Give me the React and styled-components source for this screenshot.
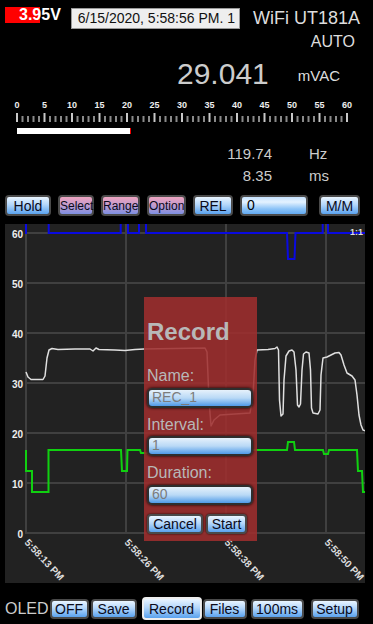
import React from "react";
import styled, { createGlobalStyle, css } from "styled-components";

const GlobalStyle = createGlobalStyle`
  html, body {
    margin: 0;
    padding: 0;
    background: #000;
  }
  body {
    font-family: "Liberation Sans", Arial, sans-serif;
  }
`;

const Page = styled.div`
  width: 373px;
  height: 624px;
  box-sizing: border-box;
  padding: 5px 0 0 5px;
  background: #000;
  color: #ccc;
  overflow: hidden;
`;

const TopRow = styled.div`
  display: flex;
  align-items: flex-start;
  height: 24px;
`;

const Battery = styled.div`
  margin-top: 2px;
  height: 16px;
  line-height: 16px;
  padding-left: 14px;
  font-size: 16px;
  font-weight: bold;
  color: #fff;
  background: linear-gradient(to right, #f00 35px, transparent 35px);
`;

const DateBox = styled.div`
  margin: 3px 0 0 10px;
  width: 169px;
  height: 21px;
  box-sizing: border-box;
  padding-left: 6px;
  border: 1px solid #999;
  background: #eee;
  color: #111;
  font-size: 14px;
  line-height: 19px;
`;

const DeviceName = styled.div`
  margin: 4px 13px 0 auto;
  font-size: 18px;
  line-height: 18px;
  color: #ddd;
`;

const ModeLabel = styled.div`
  margin-top: 5px;
  padding-right: 18px;
  text-align: right;
  font-size: 16px;
  line-height: 16px;
  color: #ddd;
`;

const Reading = styled.div`
  display: flex;
  justify-content: flex-end;
  align-items: flex-start;
  margin-top: 9px;
  padding-right: 33px;
  height: 30px;
`;

const Value = styled.span`
  font-size: 30px;
  line-height: 30px;
  margin-right: 29px;
  color: #ccc;
`;

const Unit = styled.span`
  margin-top: 9px;
  font-size: 15px;
  line-height: 15px;
  color: #ddd;
`;

const ScaleSvg = styled.svg`
  display: block;
  margin-top: 6px;
`;

const Stats = styled.div`
  display: grid;
  grid-template-columns: 267px auto;
  column-gap: 37px;
  margin-top: 6px;
  font-size: 15px;
  line-height: 22px;
  color: #ccc;
`;

const StatValue = styled.span`
  text-align: right;
`;

const Toolbar = styled.div`
  display: flex;
  align-items: center;
  gap: 7px;
  margin-top: 8px;
  height: 21px;
`;

const Btn = styled.button`
  box-sizing: border-box;
  flex: none;
  width: ${(p) => p.$w}px;
  height: ${(p) => p.$h || 21}px;
  margin-left: ${(p) => p.$ml || 0}px;
  padding: 0;
  border: 2px solid ${(p) => (p.$active ? "#eee" : "#4a4a4a")};
  border-radius: 4px;
  background: linear-gradient(#eaf5ff, #b4d7fb 45%, #5aa2ee);
  color: #0a0a1a;
  font-family: "Liberation Sans", Arial, sans-serif;
  font-size: ${(p) => p.$fs || 14}px;
  line-height: 1;
  box-shadow: 0 0 2px #000;
  white-space: nowrap;
  ${(p) =>
    p.$pink &&
    css`
      background: linear-gradient(#eea4c0, #c69ccc 45%, #7e8fe2);
    `}
`;

const OffsetInput = styled.div`
  box-sizing: border-box;
  width: 68px;
  height: 21px;
  padding-left: 5px;
  border: 2px solid #4a4a4a;
  border-radius: 4px;
  background: linear-gradient(#c6e3ff, #e4f2ff 30%, #8cc3f7 70%, #62aaf2);
  color: #000;
  font-size: 14px;
  line-height: 17px;
`;

const Chart = styled.div`
  position: relative;
  margin-top: 8px;
  width: 360px;
  height: 359px;
  background: #222;
`;

const ChartSvg = styled.svg`
  display: block;
`;

const Dialog = styled.div`
  position: absolute;
  left: 139px;
  top: 73px;
  width: 113px;
  height: 244px;
  box-sizing: border-box;
  padding: 23px 0 0 3px;
  background: rgba(158, 45, 45, 0.88);
  color: #b8b8b8;
`;

const DialogTitle = styled.div`
  font-size: 24px;
  line-height: 24px;
  font-weight: bold;
`;

const FieldLabel = styled.div`
  margin-top: ${(p) => p.$mt || 9}px;
  font-size: 16px;
  line-height: 16px;
`;

const FieldInput = styled.div`
  box-sizing: border-box;
  margin-top: 3.5px;
  width: 106px;
  height: 20px;
  padding-left: 3px;
  border: 2px solid #2e2e2e;
  border-radius: 5px;
  background: linear-gradient(#e6f1fb, #b9d9f6 50%, #4f9ae8);
  box-shadow: 0 0 3px #000;
  color: #7c7c7c;
  font-size: 14px;
  line-height: 15px;
`;

const DialogActions = styled.div`
  display: flex;
  gap: 3px;
  margin-top: 9px;
`;

const BottomBar = styled.div`
  display: flex;
  align-items: center;
  margin-top: 14px;
  height: 23px;
`;

const Oled = styled.span`
  font-size: 16px;
  line-height: 16px;
  color: #ccc;
`;

const ticks = Array.from({ length: 61 }, (_, i) => i);
const labels = [0, 5, 10, 15, 20, 25, 30, 35, 40, 45, 50, 55, 60];

const Scale = () => (
  <ScaleSvg width="360" height="42" viewBox="5 95 360 42">
    {labels.map((v) => (
      <text
        key={v}
        x={17 + v * 5.5}
        y={108}
        textAnchor="middle"
        fontFamily="Liberation Sans, Arial, sans-serif"
        fontWeight="bold"
        fontSize="9"
        fill="#eee"
      >
        {v}
      </text>
    ))}
    {ticks.map((i) => {
      const x = 17 + i * 5.5;
      const major = i % 5 === 0;
      return (
        <line
          key={i}
          x1={x}
          x2={x}
          y1={major ? 113 : 116}
          y2={122}
          stroke={major ? "#c8c8c8" : "#8a8a8a"}
          strokeWidth="2"
        />
      );
    })}
    <rect x="17" y="128" width="113" height="6" fill="#fff" />
    <rect x="130" y="128" width="1" height="6" fill="#e00" />
  </ScaleSvg>
);

const gridY = [60, 50, 40, 30, 20, 10, 0];
const gridX = [26, 126, 226, 326];
const times = ["5:58:13 PM", "5:58:26 PM", "5:58:38 PM", "5:58:50 PM"];

const bluePath =
  "M26,234 L26,200 L48.7,200 L48.7,233 L120.7,233 L120.7,200 L128,200 L128,233 L139,233 L139,200 L146,200 L146,233 L287,233 L288,259 L294.5,259 L295.5,233 L322.7,233 L322.7,200 L328,200 L328,233 L366,233";

const greenPath =
  "M26,450 L26,471 L32,471 L32,492 L48.5,492 L48.5,450 L121,450 L122,471 L127,471 L127.5,450 L140,450 L141,453 L200,453 L201,450 L287,450 L288,442 L294,442 L295,450 L323,450 L324,454 L328,454 L329,450 L357,450 L358,471 L362,471 L363,492 L366,492";

const whitePath =
  "M26,372 L28,377 L31,379.5 L43,379.5 L45,376 L47,358 L49,350 L52,348.5 L58,349.5 L75,349 L90,349 L93,351 L96,348 L99,349.5 L115,350 L125,350.5 L135,349.5 L144,349 L205,348 L207,352 L209,400 L211,426 L214,420 L220,415 L235,414 L250,413 L253,395 L255,360 L257,350 L268,349.5 L275,348.5 L277,347 L278.5,350 L279.5,400 L281,416 L283,414 L284,380 L286,356 L289,351 L292,350 L294,352 L296,370 L297.5,405 L299,407 L300.5,404 L302,370 L303.5,354 L306,352 L309,353 L310.5,370 L311.5,408 L313,413 L318,414 L320,410 L321,375 L323,358 L327,357 L331,355 L335,353 L339,352.5 L341,355 L344,365 L347,373 L352,376 L355,380 L357,395 L359,415 L361,425 L363,430 L366,431";

const Plot = () => (
  <ChartSvg width="360" height="359" viewBox="5 224 360 359">
    {gridY.map((v, k) => (
      <line key={`h${v}`} x1={26} x2={366} y1={233 + k * 50} y2={233 + k * 50} stroke="#404040" strokeWidth="2" />
    ))}
    {gridX.map((x) => (
      <line key={`v${x}`} x1={x} x2={x} y1={224} y2={534} stroke="#404040" strokeWidth="2" />
    ))}
    <path d={bluePath} fill="none" stroke="#0a0ae0" strokeWidth="2" />
    <path d={whitePath} fill="none" stroke="#e0e0e0" strokeWidth="1.5" strokeLinejoin="round" />
    <path d={greenPath} fill="none" stroke="#10d010" strokeWidth="2" />
    {gridY.map((v, k) => (
      <text
        key={`y${v}`}
        x={23}
        y={237.5 + k * 50}
        textAnchor="end"
        fontFamily="Liberation Sans, Arial, sans-serif"
        fontWeight="bold"
        fontSize="10"
        fill="#eee"
      >
        {v}
      </text>
    ))}
    {times.map((t, i) => (
      <text
        key={t}
        x={gridX[i] - 2}
        y={543}
        transform={`rotate(47 ${gridX[i] - 2} 543)`}
        fontFamily="Liberation Sans, Arial, sans-serif"
        fontWeight="bold"
        fontSize="10"
        fill="#ddd"
      >
        {t}
      </text>
    ))}
    <text
      x={363}
      y={235}
      textAnchor="end"
      fontFamily="Liberation Sans, Arial, sans-serif"
      fontWeight="bold"
      fontSize="9"
      fill="#ddd"
    >
      1:1
    </text>
  </ChartSvg>
);

const RecordDialog = () => (
  <Dialog>
    <DialogTitle>Record</DialogTitle>
    <FieldLabel $mt={24}>Name:</FieldLabel>
    <FieldInput>REC_1</FieldInput>
    <FieldLabel>Interval:</FieldLabel>
    <FieldInput>1</FieldInput>
    <FieldLabel>Duration:</FieldLabel>
    <FieldInput>60</FieldInput>
    <DialogActions>
      <Btn $w={56} $h={20}>Cancel</Btn>
      <Btn $w={41} $h={20}>Start</Btn>
    </DialogActions>
  </Dialog>
);

export default function App() {
  return (
    <>
      <GlobalStyle />
      <Page>
        <TopRow>
          <Battery>3.95V</Battery>
          <DateBox>6/15/2020, 5:58:56 PM. 1</DateBox>
          <DeviceName>WiFi UT181A</DeviceName>
        </TopRow>
        <ModeLabel>AUTO</ModeLabel>
        <Reading>
          <Value>29.041</Value>
          <Unit>mVAC</Unit>
        </Reading>
        <Scale />
        <Stats>
          <StatValue>119.74</StatValue>
          <span>Hz</span>
          <StatValue>8.35</StatValue>
          <span>ms</span>
        </Stats>
        <Toolbar>
          <Btn $w={46}>Hold</Btn>
          <Btn $w={36} $fs={12} $pink>Select</Btn>
          <Btn $w={39} $fs={12} $pink>Range</Btn>
          <Btn $w={39} $fs={12} $pink>Option</Btn>
          <Btn $w={40}>REL</Btn>
          <OffsetInput>0</OffsetInput>
          <Btn $w={41} $ml={4}>M/M</Btn>
        </Toolbar>
        <Chart>
          <Plot />
          <RecordDialog />
        </Chart>
        <BottomBar>
          <Oled>OLED</Oled>
          <Btn $w={39} $h={20} $ml={1}>OFF</Btn>
          <Btn $w={46} $h={20} $ml={2}>Save</Btn>
          <Btn $w={60} $h={23} $ml={5} $active>Record</Btn>
          <Btn $w={44} $h={20} $ml={1}>Files</Btn>
          <Btn $w={53} $h={20} $ml={4}>100ms</Btn>
          <Btn $w={48} $h={20} $ml={7}>Setup</Btn>
        </BottomBar>
      </Page>
    </>
  );
}
